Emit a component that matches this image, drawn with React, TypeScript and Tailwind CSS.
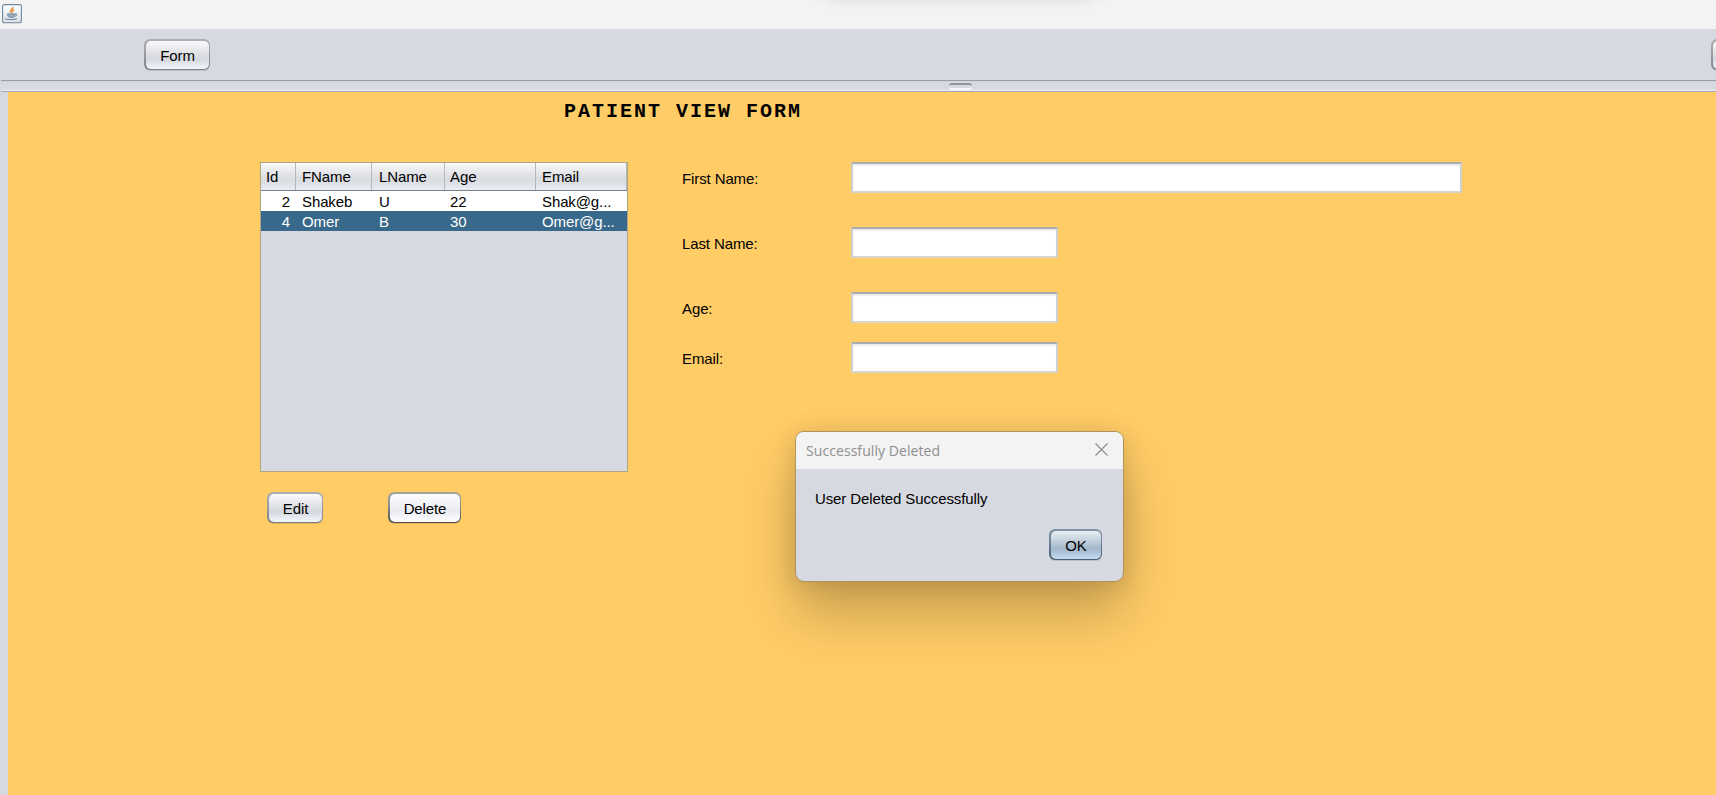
import React from "react";

const frame: Record<string, string> = {
  normal:
    "bg-[linear-gradient(180deg,#adafb3_0%,#989aa0_50%,#7c7f85_100%)]",
  hover:
    "bg-[linear-gradient(180deg,#a9a69f_0%,#858588_50%,#505053_100%)]",
  primary:
    "bg-[linear-gradient(180deg,#8094a8_0%,#6a7f95_50%,#485c71_100%)]",
};

const face: Record<string, string> = {
  normal:
    "bg-[linear-gradient(180deg,#fbfbfc_0%,#e9eaed_28%,#dcdee2_50%,#d5d8de_66%,#e4e7ee_82%,#f3f6fd_100%)]",
  hover:
    "bg-[linear-gradient(180deg,#fdfdfe_0%,#f3f4f7_30%,#e9ebf1_62%,#f3f5f9_80%,#ffffff_100%)]",
  primary:
    "bg-[linear-gradient(180deg,#e9eff3_0%,#c9d6e0_28%,#b3c4d3_48%,#a3b8cc_64%,#b2c8dc_82%,#c6dcf0_100%)]",
};

function Button({
  label,
  width,
  kind = "normal",
}: {
  label: string;
  width: string;
  kind?: string;
}) {
  return (
    <button
      className={`flex h-[31px] shrink-0 rounded-[6px] p-[1.5px] shadow-[0_1px_0_rgba(0,0,0,0.12)] ${width} ${frame[kind]}`}
    >
      <span
        className={`flex h-full w-full items-center justify-center rounded-[5px] pt-px pl-px leading-none ${face[kind]}`}
      >
        {label}
      </span>
    </button>
  );
}

function Field({
  label,
  width,
  gap,
}: {
  label: string;
  width: string;
  gap: string;
}) {
  return (
    <div className={`flex h-[31px] items-center ${gap}`}>
      <label className="w-[169px] pt-[2px] leading-none">{label}</label>
      <input
        className={`h-[31px] border-2 border-t-[#a9abad] border-r-[#cfcfd0] border-b-[#d9d5cb] border-l-[#cfcfd0] bg-white px-1 shadow-[inset_0_2px_1px_rgba(0,0,0,0.08)] outline-none ${width}`}
      />
    </div>
  );
}

const grid = "grid grid-cols-[35px_76px_73px_91px_91px]";
const rows = [
  ["2", "Shakeb", "U", "22", "Shak@g..."],
  ["4", "Omer", "B", "30", "Omer@g..."],
];

function PatientTable() {
  return (
    <div className="h-[310px] w-[368px] border border-[#b0a488] bg-[#d6d9e0]">
      <div
        className={`${grid} h-[28px] border-b border-[#7c8089] bg-[linear-gradient(180deg,#fafafb_0%,#e6e7ea_35%,#d9dbdf_60%,#dfe2e9_80%,#eaedf5_100%)]`}
      >
        {["Id", "FName", "LName", "Age", "Email"].map((h, i) => (
          <div
            key={h}
            className={`flex items-center border-r border-[#b5b7bd] leading-none ${i === 2 ? "pl-[7px]" : i === 0 || i === 3 ? "pl-[5px]" : "pl-[6px]"}`}
          >
            {h}
          </div>
        ))}
      </div>
      {rows.map((r, i) => (
        <div
          key={r[0]}
          className={`${grid} h-[20px] ${i === 1 ? "bg-[#39698a] text-white" : "bg-white"}`}
        >
          {r.map((c, j) => (
            <div
              key={j}
              className={`flex items-center leading-none ${j === 0 ? "justify-end pr-[6px]" : j === 2 ? "pl-[7px]" : j === 3 ? "pl-[5px]" : "pl-[6px]"}`}
            >
              {c}
            </div>
          ))}
        </div>
      ))}
    </div>
  );
}

function JavaIcon() {
  return (
    <svg width="20" height="20" viewBox="0 0 20 20">
      <defs>
        <linearGradient id="tile" x1="0" y1="0" x2="0" y2="1">
          <stop offset="0" stopColor="#ffffff" />
          <stop offset="1" stopColor="#d9dde2" />
        </linearGradient>
      </defs>
      <rect x="0.6" y="0.6" width="18.8" height="18.2" rx="1.6" fill="url(#tile)" stroke="#6f8aa0" strokeWidth="1.1" />
      <path d="M10.8 3c.8 1.7-2.8 2.6-2.2 4.4.2.7.9 1.2 1.1 1.800M12 5.500c-1.500.8-1.800 1.500-1 2.500" fill="none" stroke="#ec9a50" strokeWidth="1.700" />
      <path d="M5.500 9.900h7.100c-.1 2-.8 3.100-1.500 3.400H7.200c-.9-.5-1.600-1.700-1.700-3.400z" fill="#9aacbd" stroke="#6d879f" strokeWidth=".9" />
      <path d="M12.800 10.200c2.500-.6 2.300 2-.6 2.300M3.800 14.500c-.8 1.300 10 1.500 10.800-.2" fill="none" stroke="#6d879f" strokeWidth="1.100" />
    </svg>
  );
}

export default function App() {
  return (
    <div className="relative flex h-[795px] w-[1716px] flex-col overflow-hidden bg-[#d6d9e0] font-['Liberation_Sans',Arial,sans-serif] text-[15px] tracking-[-0.11px] text-black">
      <header className="relative flex h-[29px] shrink-0 overflow-hidden bg-[#f3f3f3] pt-[4px] pl-[2px]">
        <JavaIcon />
        <div className="absolute -top-[24px] left-[822px] h-[20px] w-[276px] rounded-full shadow-[0_4px_14px_rgba(0,0,0,0.09)]" />
      </header>

      <nav className="flex h-[51px] shrink-0 pt-[10px] pl-[144px]">
        <Button label="Form" width="w-[66px]" />
        <div className="ml-[1501px] flex">
          <Button label="" width="w-[66px]" />
        </div>
      </nav>

      <div className="ml-px flex h-[12px] shrink-0 justify-center border-t border-b border-t-[#9a9ea8] border-b-[#a4a8b4] bg-[linear-gradient(180deg,#cdd0d8_0px,#d6d9e0_1px,#d8dbe1_8px,#eceef3_10px)] pl-[203px]">
        <div className="mt-[2px] h-[7px] w-[23px] rounded-[3px] border-t-2 border-b-2 border-t-[#9195a0] border-b-[#f6f7fa] bg-[#d6d9e0]" />
      </div>

      <main className="ml-[8px] flex-1 bg-[#ffcc66]">
        <h1 className="h-[70px] pt-[9px] pl-[556px] font-['Courier_New','Liberation_Mono',monospace] text-[20px] leading-[22px] font-bold tracking-[2px]">
          PATIENT VIEW FORM
        </h1>
        <div className="flex pl-[252px]">
          <section className="w-[422px]">
            <PatientTable />
            <div className="flex gap-[65px] pt-[20px] pl-[7px]">
              <Button label="Edit" width="w-[56px]" />
              <Button label="Delete" width="w-[73px]" kind="hover" />
            </div>
          </section>
          <section className="flex flex-col">
            <Field label="First Name:" width="w-[611px]" gap="mb-[34px]" />
            <Field label="Last Name:" width="w-[207px]" gap="mb-[34px]" />
            <Field label="Age:" width="w-[207px]" gap="mb-[19px]" />
            <Field label="Email:" width="w-[207px]" gap="mb-0" />
          </section>
        </div>
      </main>

      <div
        role="dialog"
        className="absolute top-[431px] left-[795px] flex h-[151px] w-[329px] flex-col overflow-hidden rounded-[9px] border border-[#b0935a] bg-[#d6d9e0] shadow-[0_32px_56px_rgba(0,0,0,0.22),0_3px_24px_rgba(0,0,0,0.13)]"
      >
        <div className="flex h-[37px] shrink-0 items-center justify-between bg-[#f3f3f3] pr-[15px] pl-[10px] font-['Open_Sans',sans-serif] text-[14px] tracking-[0.07px] text-[#8f8f8f]">
          <span className="leading-none">Successfully Deleted</span>
          <svg width="13" height="13" viewBox="0 0 13 13" className="-mt-[2px]">
            <path d="M.5.5l12 12M12.500.5l-12 12" stroke="#8a8a8a" strokeWidth="1.100" />
          </svg>
        </div>
        <p className="pt-[22px] pl-[19px] leading-[16px]">User Deleted Successfully</p>
        <div className="flex justify-end pt-[22px] pr-[21px]">
          <Button label="OK" width="w-[53px]" kind="primary" />
        </div>
      </div>
    </div>
  );
}
